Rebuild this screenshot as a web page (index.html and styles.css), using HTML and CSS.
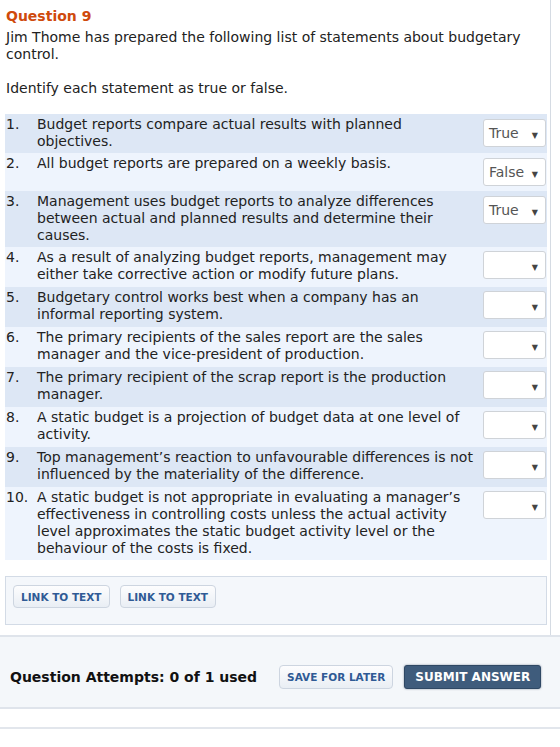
FILE: index.html
```html
<!DOCTYPE html>
<html lang="en">
<head>
    <meta charset="UTF-8">
    <title>Question 9</title>
    <link rel="stylesheet" href="styles.css">
</head>
<body>

    <div class="panel">
        <h2 class="question-title">Question 9</h2>
        <p class="intro">Jim Thome has prepared the following list of statements about budgetary control.</p>
        <p class="intro">Identify each statement as true or false.</p>

        <table class="statements">
            <tr>
                <td class="num">1.</td>
                <td class="text">Budget reports compare actual results with planned objectives.</td>
                <td class="pick"><span class="answer">True</span></td>
            </tr>
            <tr>
                <td class="num">2.</td>
                <td class="text">All budget reports are prepared on a weekly basis.</td>
                <td class="pick"><span class="answer">False</span></td>
            </tr>
            <tr>
                <td class="num">3.</td>
                <td class="text">Management uses budget reports to analyze differences between actual and planned results and determine their causes.</td>
                <td class="pick"><span class="answer">True</span></td>
            </tr>
            <tr>
                <td class="num">4.</td>
                <td class="text">As a result of analyzing budget reports, management may either take corrective action or modify future plans.</td>
                <td class="pick"><span class="answer"></span></td>
            </tr>
            <tr>
                <td class="num">5.</td>
                <td class="text">Budgetary control works best when a company has an informal reporting system.</td>
                <td class="pick"><span class="answer"></span></td>
            </tr>
            <tr>
                <td class="num">6.</td>
                <td class="text">The primary recipients of the sales report are the sales manager and the vice-president of production.</td>
                <td class="pick"><span class="answer"></span></td>
            </tr>
            <tr>
                <td class="num">7.</td>
                <td class="text">The primary recipient of the scrap report is the production manager.</td>
                <td class="pick"><span class="answer"></span></td>
            </tr>
            <tr>
                <td class="num">8.</td>
                <td class="text">A static budget is a projection of budget data at one level of activity.</td>
                <td class="pick"><span class="answer"></span></td>
            </tr>
            <tr>
                <td class="num">9.</td>
                <td class="text">Top management’s reaction to unfavourable differences is not influenced by the materiality of the difference.</td>
                <td class="pick"><span class="answer"></span></td>
            </tr>
            <tr>
                <td class="num">10.</td>
                <td class="text">A static budget is not appropriate in evaluating a manager’s effectiveness in controlling costs unless the actual activity level approximates the static budget activity level or the behaviour of the costs is fixed.</td>
                <td class="pick"><span class="answer"></span></td>
            </tr>
        </table>

        <div class="links">
            <button class="btn-light">LINK TO TEXT</button>
            <button class="btn-light">LINK TO TEXT</button>
        </div>
    </div>

    <div class="attempts-bar">
        <span class="attempts">Question Attempts: 0 of 1 used</span>
        <button class="btn-light btn-save">SAVE FOR LATER</button>
        <button class="btn-submit">SUBMIT ANSWER</button>
    </div>

    <div class="bottom-rule"></div>

</body>
</html>
```

FILE: styles.css
```css
* {
    box-sizing: border-box;
}

body {
    margin: 0;
    background: #fff;
    color: #222;
    font-family: "DejaVu Sans", Verdana, sans-serif;
    font-size: 14px;
    line-height: 17px;
}

.panel {
    width: 551px;
    padding: 8px 3px 10px 5px;
    border-right: 1px solid #d5dbe3;
}

.question-title {
    margin: 0 0 4px 1px;
    font-size: 14px;
    line-height: 17px;
    color: #cf4a0c;
}

.intro {
    margin: 0 0 17px 1px;
}

/* statement list */
.statements {
    width: 542px;
    border-collapse: collapse;
}

.statements tr:nth-child(odd) {
    background: #dde7f5;
}

.statements tr:nth-child(even) {
    background: #eef4fd;
}

.statements td {
    padding: 2px 0 3px;
    vertical-align: top;
}

.statements .num {
    width: 32px;
    padding-left: 1px;
}

.statements .text {
    padding-right: 8px;
}

.statements .pick {
    width: 64px;
    padding-right: 1px;
}

.answer {
    position: relative;
    display: block;
    width: 63px;
    height: 28px;
    margin: 3px 0 2px;
    padding: 5px 0 0 5px;
    background: #fff;
    border: 1px solid #cfd3d8;
    border-radius: 3px;
    color: #555;
}

.answer:empty {
    margin: 2px 0 5px;
}

.answer::after {
    content: "▼";
    position: absolute;
    right: 7px;
    top: 7px;
    font-size: 8px;
    color: #444;
}

/* buttons */
.links {
    margin-top: 16px;
    width: 542px;
    padding: 8px 7px 16px;
    background: #f4f7fb;
    border: 1px solid #d3dbe6;
    display: flex;
    gap: 10px;
}

.btn-light {
    height: 23px;
    padding: 0 7px;
    background: linear-gradient(#fdfdfe, #e9eef4);
    border: 1px solid #cdd5e0;
    border-radius: 4px;
    color: #2f5a95;
    font-family: inherit;
    font-size: 10.5px;
    font-weight: bold;
}

.attempts-bar {
    display: flex;
    align-items: center;
    height: 74px;
    padding: 10px 0 0 10px;
    background: #f4f7fa;
    border-top: 2px solid #dfe4eb;
    border-bottom: 2px solid #dfe4eb;
}

.attempts {
    font-size: 14px;
    font-weight: bold;
    color: #111;
}

.btn-save {
    margin-left: 22px;
    height: 24px;
    padding: 0 7px;
    font-size: 10.5px;
}

.btn-submit {
    margin-left: 11px;
    height: 24px;
    padding: 0 10px;
    background: #3f5c7c;
    border: 1px solid #2f4864;
    border-radius: 3px;
    box-shadow: 0 0 2px rgba(40, 60, 90, 0.6);
    color: #fff;
    font-family: inherit;
    font-size: 12px;
    font-weight: bold;
}

.bottom-rule {
    margin-top: 18px;
    border-top: 2px solid #e2e6ec;
}
```
